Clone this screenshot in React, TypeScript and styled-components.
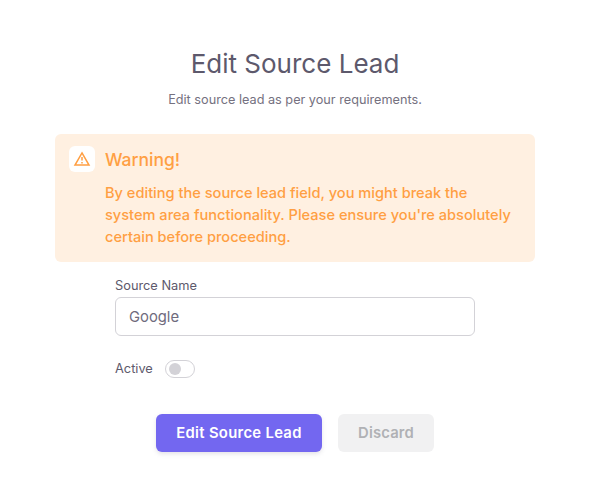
import React, { useState } from 'react';
import styled, { createGlobalStyle } from 'styled-components';

const GlobalStyle = createGlobalStyle`
  *, *::before, *::after { box-sizing: border-box; }
  body {
    margin: 0;
    background: #fff;
    color: #6f6b7d;
    font-family: Inter, "Liberation Sans", sans-serif;
    font-size: 14.8px;
  }
`;

const Dialog = styled.main`
  display: flex;
  flex-direction: column;
  align-items: center;
  width: 592px;
  height: 498px;
  padding: 46px 57px 0 55px;
`;

const Title = styled.h1`
  margin: 0;
  color: #5d596c;
  font-size: 26px;
  font-weight: 400;
  line-height: 36px;
`;

const Subtitle = styled.p`
  margin: 8px 0 0;
  color: #75717f;
  font-size: 12.7px;
  line-height: 20px;
`;

const Alert = styled.section`
  display: flex;
  align-items: flex-start;
  gap: 10px;
  width: 480px;
  height: 128px;
  margin-top: 24px;
  padding: 12px 14px;
  border-radius: 6px;
  background: #fff0e1;
  color: #ff9f43;
`;

const AlertIcon = styled.span`
  display: flex;
  flex: none;
  align-items: center;
  justify-content: center;
  width: 26px;
  height: 26px;
  border-radius: 6px;
  background: #fff;
`;

const AlertTitle = styled.h2`
  margin: 2px 0 0;
  font-size: 17.5px;
  font-weight: 500;
  line-height: 24px;
`;

const AlertText = styled.p`
  margin: 10px 0 0;
  font-size: 14.6px;
  font-weight: 500;
  line-height: 22px;
  white-space: nowrap;
`;

const Form = styled.form`
  display: flex;
  flex-direction: column;
  width: 360px;
  margin-top: 14px;
`;

const Label = styled.label`
  color: #5d596c;
  font-size: 12.8px;
  line-height: 20px;
`;

const TextInput = styled.input`
  width: 100%;
  height: 39px;
  margin-top: 1px;
  padding: 1px 13px 0;
  border: 1px solid #d3d2d7;
  border-radius: 6px;
  outline: none;
  background: #fff;
  color: #6f6b7d;
  font: inherit;
`;

const SwitchRow = styled.div`
  display: flex;
  align-items: center;
  height: 20px;
  margin-top: 23px;
`;

const SwitchLabel = styled(Label)`
  width: 50px;
`;

const Switch = styled.button<{ $on: boolean }>`
  display: flex;
  align-items: center;
  justify-content: ${({ $on }) => ($on ? 'flex-end' : 'flex-start')};
  width: 30px;
  height: 18px;
  padding: 0 3px;
  border: 1px solid ${({ $on }) => ($on ? '#7367f0' : '#d3d2d7')};
  border-radius: 9px;
  background: ${({ $on }) => ($on ? '#7367f0' : '#fff')};
`;

const Knob = styled.span<{ $on: boolean }>`
  width: 12px;
  height: 12px;
  border-radius: 50%;
  background: ${({ $on }) => ($on ? '#fff' : '#d3d2d7')};
`;

const Actions = styled.div`
  display: flex;
  justify-content: center;
  gap: 16px;
  margin-top: 35px;
`;

const Button = styled.button<{ $primary?: boolean }>`
  width: ${({ $primary }) => ($primary ? '166px' : '96px')};
  height: 38px;
  padding: 0;
  border: 0;
  border-radius: 6px;
  background: ${({ $primary }) => ($primary ? '#7367f0' : '#f1f1f2')};
  box-shadow: ${({ $primary }) => ($primary ? '0 2px 4px rgba(165, 163, 174, 0.3)' : 'none')};
  color: ${({ $primary }) => ($primary ? '#fff' : '#b0b1b5')};
  font: 600 14.8px Inter, "Liberation Sans", sans-serif;
  letter-spacing: ${({ $primary }) => ($primary ? '0.32px' : '0.15px')};
  white-space: nowrap;
`;

const WarningIcon = () => (
  <svg width="18" height="18" viewBox="0 0 18 18" fill="none" stroke="currentColor" strokeWidth="1.5">
    <path d="M9 2.9 16 15H2L9 2.9Z" strokeLinejoin="miter" />
    <path d="M9 7v3.4M9 12v1.5" />
  </svg>
);

export default function App() {
  const [active, setActive] = useState(false);
  return (
    <>
      <GlobalStyle />
      <Dialog>
        <Title>Edit Source Lead</Title>
        <Subtitle>Edit source lead as per your requirements.</Subtitle>
        <Alert>
          <AlertIcon><WarningIcon /></AlertIcon>
          <div>
            <AlertTitle>Warning!</AlertTitle>
            <AlertText>
              By editing the source lead field, you might break the<br />
              system area functionality. Please ensure you're absolutely<br />
              certain before proceeding.
            </AlertText>
          </div>
        </Alert>
        <Form onSubmit={(event) => event.preventDefault()}>
          <Label htmlFor="source-name">Source Name</Label>
          <TextInput id="source-name" defaultValue="Google" />
          <SwitchRow>
            <SwitchLabel htmlFor="active">Active</SwitchLabel>
            <Switch id="active" type="button" role="switch" aria-checked={active} $on={active} onClick={() => setActive(!active)}>
              <Knob $on={active} />
            </Switch>
          </SwitchRow>
          <Actions>
            <Button $primary type="submit">Edit Source Lead</Button>
            <Button type="reset">Discard</Button>
          </Actions>
        </Form>
      </Dialog>
    </>
  );
}
